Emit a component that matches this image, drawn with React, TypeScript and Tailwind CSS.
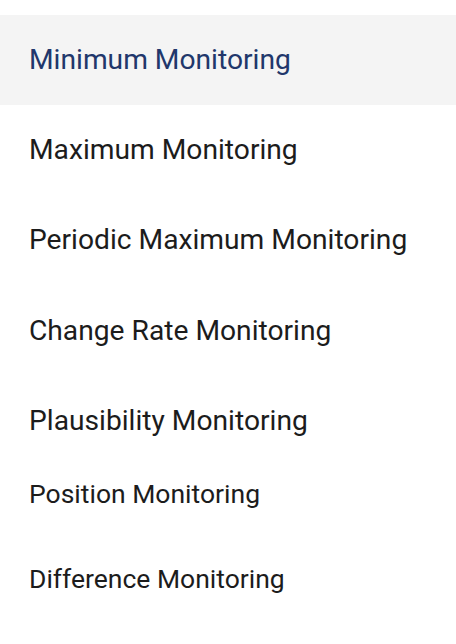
const ITEMS = [
  { label: "Minimum Monitoring", h: "h-[90px]", size: "text-[28.2px]", active: true },
  { label: "Maximum Monitoring", h: "h-[90px]", size: "text-[28.2px]" },
  { label: "Periodic Maximum Monitoring", h: "h-[91px]", size: "text-[28.2px]" },
  { label: "Change Rate Monitoring", h: "h-[90px]", size: "text-[28.2px]" },
  { label: "Plausibility Monitoring", h: "h-[90px]", size: "text-[28.2px]" },
  { label: "Position Monitoring", h: "h-[55px]", size: "text-[26.5px]" },
  { label: "Difference Monitoring", h: "h-[115px]", size: "text-[26.5px]" },
];

export default function App() {
  return (
    <div
      className="w-[456px] h-[644px] bg-white pt-[15px] overflow-hidden"
      style={{ fontFamily: "Roboto, 'Liberation Sans', sans-serif" }}
    >
      <ul className="flex flex-col">
        {ITEMS.map((item) => (
          <li
            key={item.label}
            className={`flex items-center pl-[29px] whitespace-nowrap ${item.size} ${item.h} ${
              item.active ? "bg-[#f4f4f4] text-[#21376b]" : "text-[#1c1c1c]"
            }`}
          >
            {item.label}
          </li>
        ))}
      </ul>
    </div>
  );
}
